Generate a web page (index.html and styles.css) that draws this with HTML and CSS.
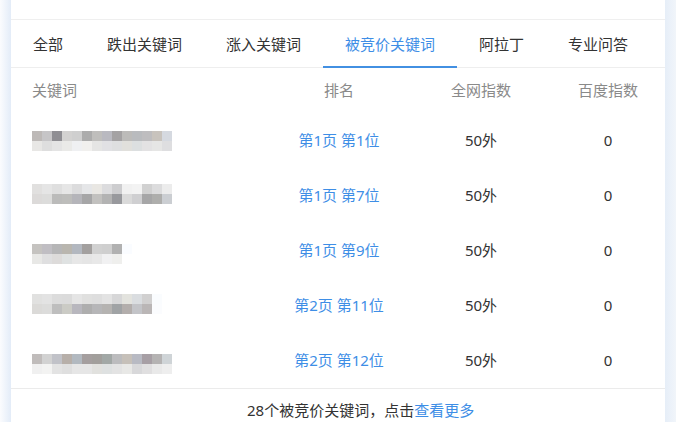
FILE: index.html
```html
<!DOCTYPE html>
<html lang="zh-CN">
<head>
<meta charset="utf-8">
<title>被竞价关键词</title>
<link rel="stylesheet" href="styles.css">
</head>
<body>
<div class="page">
  <div class="gutter gutter-left"></div>
  <div class="card">
    <div class="top"></div>
    <div class="tabs">
      <div class="tab">全部</div>
      <div class="tab">跌出关键词</div>
      <div class="tab">涨入关键词</div>
      <div class="tab active">被竞价关键词</div>
      <div class="tab">阿拉丁</div>
      <div class="tab">专业问答</div>
    </div>
    <div class="table">
      <div class="row head">
        <div>关键词</div>
        <div class="c">排名</div>
        <div class="c">全网指数</div>
        <div class="c">百度指数</div>
      </div>
      <div class="row item">
        <div class="kw">
          <svg class="mosaic mid" width="150" height="20" viewBox="0 0 150 20">
            <rect x="0" y="0" width="10" height="10" fill="#bdb9b7"/><rect x="10" y="0" width="10" height="10" fill="#c6c5c7"/><rect x="20" y="0" width="10" height="10" fill="#8f8e93"/><rect x="30" y="0" width="10" height="10" fill="#d3d2d1"/><rect x="40" y="0" width="10" height="10" fill="#cfcfcf"/><rect x="50" y="0" width="10" height="10" fill="#acacac"/><rect x="60" y="0" width="10" height="10" fill="#bfbebc"/><rect x="70" y="0" width="10" height="10" fill="#b9b9c0"/><rect x="80" y="0" width="10" height="10" fill="#a4a2a3"/><rect x="90" y="0" width="10" height="10" fill="#bcbbb9"/><rect x="100" y="0" width="10" height="10" fill="#b9bbbe"/><rect x="110" y="0" width="10" height="10" fill="#bebdbf"/><rect x="120" y="0" width="10" height="10" fill="#c8c3bd"/><rect x="130" y="0" width="10" height="10" fill="#d5d9e0"/>
            <rect x="0" y="10" width="10" height="10" fill="#e8e7e5"/><rect x="10" y="10" width="10" height="10" fill="#dedede"/><rect x="20" y="10" width="10" height="10" fill="#e4e4e4"/><rect x="30" y="10" width="10" height="10" fill="#eaeae8"/><rect x="40" y="10" width="10" height="10" fill="#eff0f2"/><rect x="50" y="10" width="10" height="10" fill="#f1f0ee"/><rect x="60" y="10" width="10" height="10" fill="#e5e5e4"/><rect x="70" y="10" width="10" height="10" fill="#e1e1e4"/><rect x="80" y="10" width="10" height="10" fill="#dedfe0"/><rect x="90" y="10" width="10" height="10" fill="#e1e0dc"/><rect x="100" y="10" width="10" height="10" fill="#dcdfe0"/><rect x="110" y="10" width="10" height="10" fill="#e3e2e3"/><rect x="120" y="10" width="10" height="10" fill="#e6e6e5"/><rect x="130" y="10" width="10" height="10" fill="#dedee0"/>
          </svg>
        </div>
        <div class="c rank">第1页 第1位</div>
        <div class="c">50外</div>
        <div class="c">0</div>
      </div>
      <div class="row item">
        <div class="kw">
          <svg class="mosaic up" width="150" height="20" viewBox="0 0 150 20">
            <rect x="0" y="0" width="10" height="10" fill="#e1e0df"/><rect x="10" y="0" width="10" height="10" fill="#e5e5e5"/><rect x="20" y="0" width="10" height="10" fill="#dfdfdf"/><rect x="30" y="0" width="10" height="10" fill="#e6e6e6"/><rect x="40" y="0" width="10" height="10" fill="#dcdcdd"/><rect x="50" y="0" width="10" height="10" fill="#e5e6e8"/><rect x="60" y="0" width="10" height="10" fill="#e9e7e3"/><rect x="70" y="0" width="10" height="10" fill="#dcdcde"/><rect x="80" y="0" width="10" height="10" fill="#cdcdcf"/><rect x="90" y="0" width="10" height="10" fill="#f1f1f1"/><rect x="100" y="0" width="10" height="10" fill="#f3f3f3"/><rect x="110" y="0" width="10" height="10" fill="#d1d1d1"/><rect x="120" y="0" width="10" height="10" fill="#dcdcdd"/><rect x="130" y="0" width="10" height="10" fill="#ececec"/>
            <rect x="0" y="10" width="10" height="10" fill="#dcdad9"/><rect x="10" y="10" width="10" height="10" fill="#dcdcdb"/><rect x="20" y="10" width="10" height="10" fill="#bbbbba"/><rect x="30" y="10" width="10" height="10" fill="#bdbdbb"/><rect x="40" y="10" width="10" height="10" fill="#b5b5ba"/><rect x="50" y="10" width="10" height="10" fill="#a6a6a7"/><rect x="60" y="10" width="10" height="10" fill="#c2c1bf"/><rect x="70" y="10" width="10" height="10" fill="#b3b3b3"/><rect x="80" y="10" width="10" height="10" fill="#98999d"/><rect x="90" y="10" width="10" height="10" fill="#dadada"/><rect x="100" y="10" width="10" height="10" fill="#cfcfd1"/><rect x="110" y="10" width="10" height="10" fill="#a6a6a7"/><rect x="120" y="10" width="10" height="10" fill="#aeaeac"/><rect x="130" y="10" width="10" height="10" fill="#cbced2"/>
          </svg>
        </div>
        <div class="c rank">第1页 第7位</div>
        <div class="c">50外</div>
        <div class="c">0</div>
      </div>
      <div class="row item">
        <div class="kw">
          <svg class="mosaic down" width="150" height="20" viewBox="0 0 150 20">
            <rect x="0" y="0" width="10" height="10" fill="#c5c3c0"/><rect x="10" y="0" width="10" height="10" fill="#c0bec3"/><rect x="20" y="0" width="10" height="10" fill="#b6b6b7"/><rect x="30" y="0" width="10" height="10" fill="#b9b6af"/><rect x="40" y="0" width="10" height="10" fill="#b3b8c0"/><rect x="50" y="0" width="10" height="10" fill="#a3a09f"/><rect x="60" y="0" width="10" height="10" fill="#d1d1d1"/><rect x="70" y="0" width="10" height="10" fill="#cfcfcf"/><rect x="80" y="0" width="10" height="10" fill="#b1b1b1"/><rect x="90" y="0" width="10" height="10" fill="#fafcff"/>
            <rect x="0" y="10" width="10" height="10" fill="#e8e8e6"/><rect x="10" y="10" width="10" height="10" fill="#dfdfe0"/><rect x="20" y="10" width="10" height="10" fill="#dddbda"/><rect x="30" y="10" width="10" height="10" fill="#dfe2e2"/><rect x="40" y="10" width="10" height="10" fill="#e7e7e7"/><rect x="50" y="10" width="10" height="10" fill="#e5e5e5"/><rect x="60" y="10" width="10" height="10" fill="#e8e8e8"/><rect x="70" y="10" width="10" height="10" fill="#f1f1f2"/><rect x="80" y="10" width="10" height="10" fill="#efefed"/>
          </svg>
        </div>
        <div class="c rank">第1页 第9位</div>
        <div class="c">50外</div>
        <div class="c">0</div>
      </div>
      <div class="row item">
        <div class="kw">
          <svg class="mosaic up" width="150" height="20" viewBox="0 0 150 20">
            <rect x="0" y="0" width="10" height="10" fill="#e1e1e0"/><rect x="10" y="0" width="10" height="10" fill="#e3e3e3"/><rect x="20" y="0" width="10" height="10" fill="#dcdcdc"/><rect x="30" y="0" width="10" height="10" fill="#dbdbdb"/><rect x="40" y="0" width="10" height="10" fill="#e5e5e5"/><rect x="50" y="0" width="10" height="10" fill="#e0e0df"/><rect x="60" y="0" width="10" height="10" fill="#dedede"/><rect x="70" y="0" width="10" height="10" fill="#e3e3e3"/><rect x="80" y="0" width="10" height="10" fill="#d7d7d8"/><rect x="90" y="0" width="10" height="10" fill="#e3e3de"/><rect x="100" y="0" width="10" height="10" fill="#dadde0"/><rect x="110" y="0" width="10" height="10" fill="#d1d0d0"/><rect x="120" y="0" width="10" height="10" fill="#fafcfe"/>
            <rect x="0" y="10" width="10" height="10" fill="#dbdad8"/><rect x="10" y="10" width="10" height="10" fill="#dcdcdb"/><rect x="20" y="10" width="10" height="10" fill="#bebebe"/><rect x="30" y="10" width="10" height="10" fill="#cbcbc5"/><rect x="40" y="10" width="10" height="10" fill="#b8b7be"/><rect x="50" y="10" width="10" height="10" fill="#aeaeae"/><rect x="60" y="10" width="10" height="10" fill="#b6b6b8"/><rect x="70" y="10" width="10" height="10" fill="#b5b3b1"/><rect x="80" y="10" width="10" height="10" fill="#a0a3a5"/><rect x="90" y="10" width="10" height="10" fill="#b3aeac"/><rect x="100" y="10" width="10" height="10" fill="#c3c4c8"/><rect x="110" y="10" width="10" height="10" fill="#bab6b6"/><rect x="120" y="10" width="10" height="10" fill="#fbfcfe"/>
          </svg>
        </div>
        <div class="c rank">第2页 第11位</div>
        <div class="c">50外</div>
        <div class="c">0</div>
      </div>
      <div class="row item">
        <div class="kw">
          <svg class="mosaic down" width="150" height="20" viewBox="0 0 150 20">
            <rect x="0" y="0" width="10" height="10" fill="#c0bcbb"/><rect x="10" y="0" width="10" height="10" fill="#d2d2d2"/><rect x="20" y="0" width="10" height="10" fill="#c1c2c8"/><rect x="30" y="0" width="10" height="10" fill="#b7afa9"/><rect x="40" y="0" width="10" height="10" fill="#b2b9c0"/><rect x="50" y="0" width="10" height="10" fill="#a59f9f"/><rect x="60" y="0" width="10" height="10" fill="#a29f9c"/><rect x="70" y="0" width="10" height="10" fill="#a2a8a6"/><rect x="80" y="0" width="10" height="10" fill="#bcbcbe"/><rect x="90" y="0" width="10" height="10" fill="#c6c0b9"/><rect x="100" y="0" width="10" height="10" fill="#b8bac3"/><rect x="110" y="0" width="10" height="10" fill="#a79fa5"/><rect x="120" y="0" width="10" height="10" fill="#b5b3b3"/><rect x="130" y="0" width="10" height="10" fill="#cfd4d7"/>
            <rect x="0" y="10" width="10" height="10" fill="#f0f0f0"/><rect x="10" y="10" width="10" height="10" fill="#f3f3f2"/><rect x="20" y="10" width="10" height="10" fill="#e3e3e3"/><rect x="30" y="10" width="10" height="10" fill="#dfdfdf"/><rect x="40" y="10" width="10" height="10" fill="#e6e6e6"/><rect x="50" y="10" width="10" height="10" fill="#e6e6e6"/><rect x="60" y="10" width="10" height="10" fill="#e1e1de"/><rect x="70" y="10" width="10" height="10" fill="#dee1e1"/><rect x="80" y="10" width="10" height="10" fill="#e3e3e3"/><rect x="90" y="10" width="10" height="10" fill="#e8e8e6"/><rect x="100" y="10" width="10" height="10" fill="#d8d8da"/><rect x="110" y="10" width="10" height="10" fill="#e0dfe0"/><rect x="120" y="10" width="10" height="10" fill="#e9e9e9"/><rect x="130" y="10" width="10" height="10" fill="#eeeeee"/>
          </svg>
        </div>
        <div class="c rank">第2页 第12位</div>
        <div class="c">50外</div>
        <div class="c">0</div>
      </div>
    </div>
    <div class="footer">28个被竞价关键词，点击<a class="more" href="#">查看更多</a></div>
  </div>
  <div class="gutter gutter-right"></div>
</div>
</body>
</html>
```

FILE: styles.css
```css
html, body {
  margin: 0;
  padding: 0;
  background: #ffffff;
}

body {
  font-family: "Noto Sans", "Noto Sans CJK SC", sans-serif;
  font-size: 15px;
  color: #333333;
}

.page {
  display: flex;
  height: 422px;
  overflow: hidden;
}

.gutter {
  width: 11px;
  flex: none;
}

.gutter-left {
  background: linear-gradient(to right, #fbfcfe, #e3ecf8);
}

.gutter-right {
  background: linear-gradient(to right, #e6eef8, #f1f5fa);
}

.card {
  width: 654px;
  flex: none;
  background: #ffffff;
  display: flex;
  flex-direction: column;
}

.card > * {
  flex: none;
}

.top {
  height: 19px;
  border-bottom: 1px solid #efefef;
}

.tabs {
  display: flex;
  height: 47px;
  border-bottom: 1px solid #eeeeee;
}

.tab {
  position: relative;
  display: flex;
  align-items: center;
  padding: 0 22px;
  line-height: 20px;
  color: #333333;
}

.tab.active {
  color: #3e8ee6;
}

.tab.active::after {
  content: "";
  position: absolute;
  left: 0;
  right: 0;
  bottom: -1px;
  height: 2px;
  background: #4290e2;
}

.row {
  display: grid;
  grid-template-columns: 236px 142px 142px 112px;
  align-items: center;
  padding-left: 21px;
  line-height: 20px;
  box-sizing: border-box;
  padding-bottom: 2px;
}

.head {
  height: 45px;
  color: #8a8a8a;
}

.item {
  height: 55px;
  color: #333333;
}

.c {
  text-align: center;
}

.rank {
  color: #3e8ee6;
}

.kw {
  display: flex;
  align-items: center;
}

.mosaic {
  display: block;
}

.mosaic.mid {
  transform: translateY(1px);
}

.mosaic.up {
  transform: translateY(-1px);
}

.mosaic.down {
  transform: translateY(4px);
}

.footer {
  border-top: 1px solid #ebebeb;
  height: 44px;
  display: flex;
  align-items: center;
  padding-left: 236px;
  line-height: 20px;
  color: #333333;
  box-sizing: border-box;
  padding-bottom: 2px;
}

.more {
  color: #3e8ee6;
  text-decoration: none;
}
```
